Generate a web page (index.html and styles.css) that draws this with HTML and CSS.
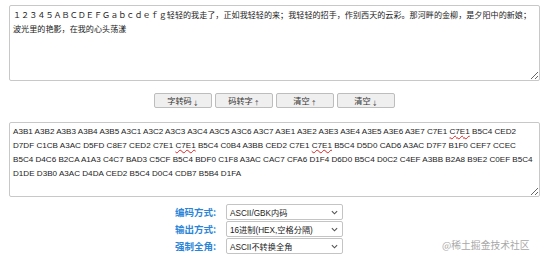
FILE: index.html
```html
<!DOCTYPE html>
<html lang="zh-CN">

<head>
  <meta charset="UTF-8">
  <meta name="viewport" content="width=device-width, initial-scale=1.0">
  <title>汉字编码转换</title>
  <link rel="stylesheet" href="styles.css">
</head>

<body>

  <div class="page">
    <div class="text-box source" id="source">１２３４５ＡＢＣＤＥＦＧａｂｃｄｅｆｇ轻轻的我走了，正如我轻轻的来；我轻轻的招手，作别西天的云彩。那河畔的金柳，是夕阳中的新娘；波光里的艳影，在我的心头荡漾</div>

    <div class="button-row">
      <button class="btn">字转码<span class="arrow">↓</span></button>
      <button class="btn">码转字<span class="arrow">↑</span></button>
      <button class="btn">清空<span class="arrow">↑</span></button>
      <button class="btn">清空<span class="arrow">↓</span></button>
    </div>

    <div class="text-box output" id="output">A3B1 A3B2 A3B3 A3B4 A3B5 A3C1 A3C2 A3C3 A3C4 A3C5 A3C6 A3C7 A3E1 A3E2 A3E3 A3E4 A3E5 A3E6 A3E7 C7E1 <span class="typo">C7E1</span> B5C4 CED2 D7DF C1CB A3AC D5FD C8E7 CED2 C7E1 <span class="typo">C7E1</span> B5C4 C0B4 A3BB CED2 C7E1 <span class="typo">C7E1</span> B5C4 D5D0 CAD6 A3AC D7F7 B1F0 CEF7 CCEC B5C4 D4C6 B2CA A1A3 C4C7 BAD3 C5CF B5C4 BDF0 C1F8 A3AC CAC7 CFA6 D1F4 D6D0 B5C4 D0C2 C4EF A3BB B2A8 B9E2 C0EF B5C4 D1DE D3B0 A3AC D4DA CED2 B5C4 D0C4 CDB7 B5B4 D1FA</div>

    <div class="options">
      <label class="opt-label">编码方式:</label>
      <div class="select">
        <span>ASCII/GBK内码</span>
        <svg class="chevron" viewBox="0 0 8 5" width="7" height="5"><path d="M1 1 L4 4 L7 1" fill="none" stroke="#555" stroke-width="1.3"/></svg>
      </div>

      <label class="opt-label">输出方式:</label>
      <div class="select">
        <span>16进制(HEX,空格分隔)</span>
        <svg class="chevron" viewBox="0 0 8 5" width="7" height="5"><path d="M1 1 L4 4 L7 1" fill="none" stroke="#555" stroke-width="1.3"/></svg>
      </div>

      <label class="opt-label">强制全角:</label>
      <div class="select">
        <span>ASCII不转换全角</span>
        <svg class="chevron" viewBox="0 0 8 5" width="7" height="5"><path d="M1 1 L4 4 L7 1" fill="none" stroke="#555" stroke-width="1.3"/></svg>
      </div>
    </div>
  </div>

  <div class="watermark">@稀土掘金技术社区</div>

</body>

</html>
```

FILE: styles.css
```css
body {
  margin: 0;
  background-color: #fff;
  font-family: "Liberation Sans", "Noto Sans CJK SC", sans-serif;
  color: #222;
}

.page {
  width: 531px;
  padding: 5px 0 0 9px;
}

.text-box {
  box-sizing: border-box;
  width: 531px;
  border: 1px solid #c8c8c8;
  border-radius: 2px;
  padding: 2px 3px;
  line-height: 14px;
  overflow: auto;
  resize: both;
  word-break: break-all;
}

.source {
  height: 76px;
  font-family: "Noto Sans CJK SC", sans-serif;
  font-size: 8.1px;
}

.output {
  height: 75px;
  font-size: 8.1px;
  padding-top: 2px;
  word-break: normal;
}

.typo {
  text-decoration: underline wavy #e02020;
  text-decoration-thickness: 1px;
  text-underline-offset: 1px;
}

.button-row {
  display: flex;
  justify-content: center;
  gap: 3px;
  margin: 12px 0 14px;
}

.btn {
  box-sizing: border-box;
  width: 58px;
  height: 15px;
  padding: 0;
  border: 1px solid #bdbdbd;
  border-radius: 2px;
  background-color: #efefef;
  color: #333;
  font-family: "Noto Sans CJK SC", sans-serif;
  font-size: 8.2px;
  line-height: 13px;
}

.arrow {
  font-size: 6px;
  vertical-align: -1px;
  margin-left: 1px;
}

.options {
  display: grid;
  grid-template-columns: 46px 117px;
  column-gap: 5px;
  row-gap: 1px;
  margin: 7px 0 0 166px;
  align-items: center;
}

.opt-label {
  color: #2a84d8;
  font-family: "Noto Sans CJK SC", sans-serif;
  font-weight: bold;
  font-size: 9.5px;
  white-space: nowrap;
}

.select {
  box-sizing: border-box;
  height: 16px;
  display: flex;
  align-items: center;
  justify-content: space-between;
  padding: 0 4px 0 3px;
  border: 1px solid #c4c4c4;
  border-radius: 2px;
  font-size: 8.2px;
  color: #222;
}

.chevron {
  display: block;
}

.watermark {
  position: absolute;
  left: 442px;
  top: 238px;
  color: #a8a8a8;
  font-family: "Noto Sans CJK SC", sans-serif;
  font-size: 9.8px;
  line-height: 14px;
  white-space: nowrap;
}
```
